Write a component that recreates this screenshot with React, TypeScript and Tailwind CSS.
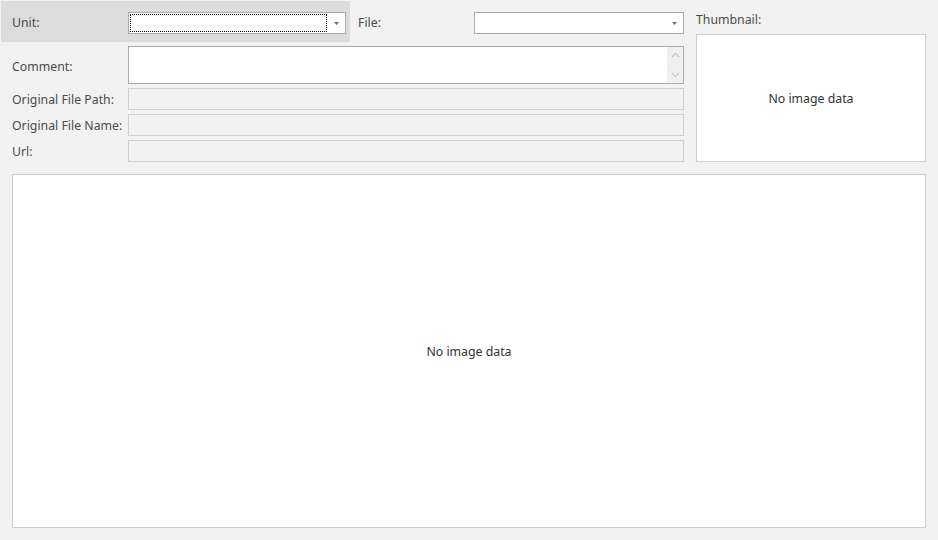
import React from "react";

const font = { fontFamily: '"Noto Sans", "Open Sans", sans-serif' };

function Arrow() {
  return (
    <svg width="5" height="3" viewBox="0 0 5 3" className="block">
      <path d="M0 0 H5 L2.5 3 Z" fill="#707070" />
    </svg>
  );
}

function Combo({ width, focused }: { width: string; focused?: boolean }) {
  return (
    <div className={`${width} h-[22px] bg-white border border-[#ababab] flex items-center`}>
      <div className="flex-1 h-full p-px">
        {focused ? <div className="w-full h-full border border-dotted border-black" /> : null}
      </div>
      <div className="w-[17px] h-full flex items-center justify-center pt-[1px]">
        <Arrow />
      </div>
    </div>
  );
}

function ReadOnlyRow({ label }: { label: string }) {
  return (
    <div className="flex items-center h-[22px] mt-[4px]">
      <div className="w-[128px] pl-[12px] pt-[2px] text-[12.3px] text-[#4a4a4a] whitespace-nowrap">{label}</div>
      <div className="w-[556px] h-[22px] bg-[#f2f2f2] border border-[#d0d0d0]" />
    </div>
  );
}

export default function App() {
  return (
    <div className="w-[938px] h-[540px] bg-[#f2f2f2] pt-px overflow-hidden" style={font}>
      <div className="flex">
        <div className="w-[684px] shrink-0">
          <div className="flex h-[41px] items-center">
            <div className="ml-px w-[349px] h-full bg-[#dcdcdc] flex items-center pl-[11px] pt-[2px]">
              <div className="w-[116px] pt-[2px] text-[12.3px] text-[#4a4a4a]">Unit:</div>
              <Combo width="w-[218px]" focused />
            </div>
            <div className="h-full flex items-center pt-[2px]">
              <div className="ml-[8px] w-[116px] pt-[2px] text-[12.3px] text-[#4a4a4a]">File:</div>
              <Combo width="w-[210px]" />
            </div>
          </div>
          <div className="flex mt-[4px] h-[38px]">
            <div className="w-[128px] pl-[12px] pt-[12px] text-[12.3px] text-[#4a4a4a]">Comment:</div>
            <div className="w-[556px] h-[38px] bg-white border border-[#ababab] flex">
              <div className="flex-1" />
              <div className="w-[16px] h-full bg-[#f0f0f0] flex flex-col items-center justify-between py-[5px]">
                <svg width="9" height="6" viewBox="0 0 9 6">
                  <path d="M1 5 L4.5 1.5 L8 5" stroke="#c4c4c4" strokeWidth="1.2" fill="none" />
                </svg>
                <svg width="9" height="6" viewBox="0 0 9 6">
                  <path d="M1 1 L4.5 4.5 L8 1" stroke="#c4c4c4" strokeWidth="1.2" fill="none" />
                </svg>
              </div>
            </div>
          </div>
          <ReadOnlyRow label="Original File Path:" />
          <ReadOnlyRow label="Original File Name:" />
          <ReadOnlyRow label="Url:" />
        </div>
        <div className="ml-[12px] w-[230px] flex flex-col">
          <div className="h-[33px] flex items-center pt-[6px] text-[12.3px] text-[#4a4a4a]">Thumbnail:</div>
          <div className="h-[128px] bg-white border border-[#d0d0d0] flex items-center justify-center text-[12.3px] text-[#333333] pt-[2px]">
            No image data
          </div>
        </div>
      </div>
      <div className="mt-[12px] mx-[12px] h-[354px] bg-white border border-[#cccccc] flex items-center justify-center text-[12.3px] text-[#333333] pt-[2px]">
        No image data
      </div>
    </div>
  );
}
